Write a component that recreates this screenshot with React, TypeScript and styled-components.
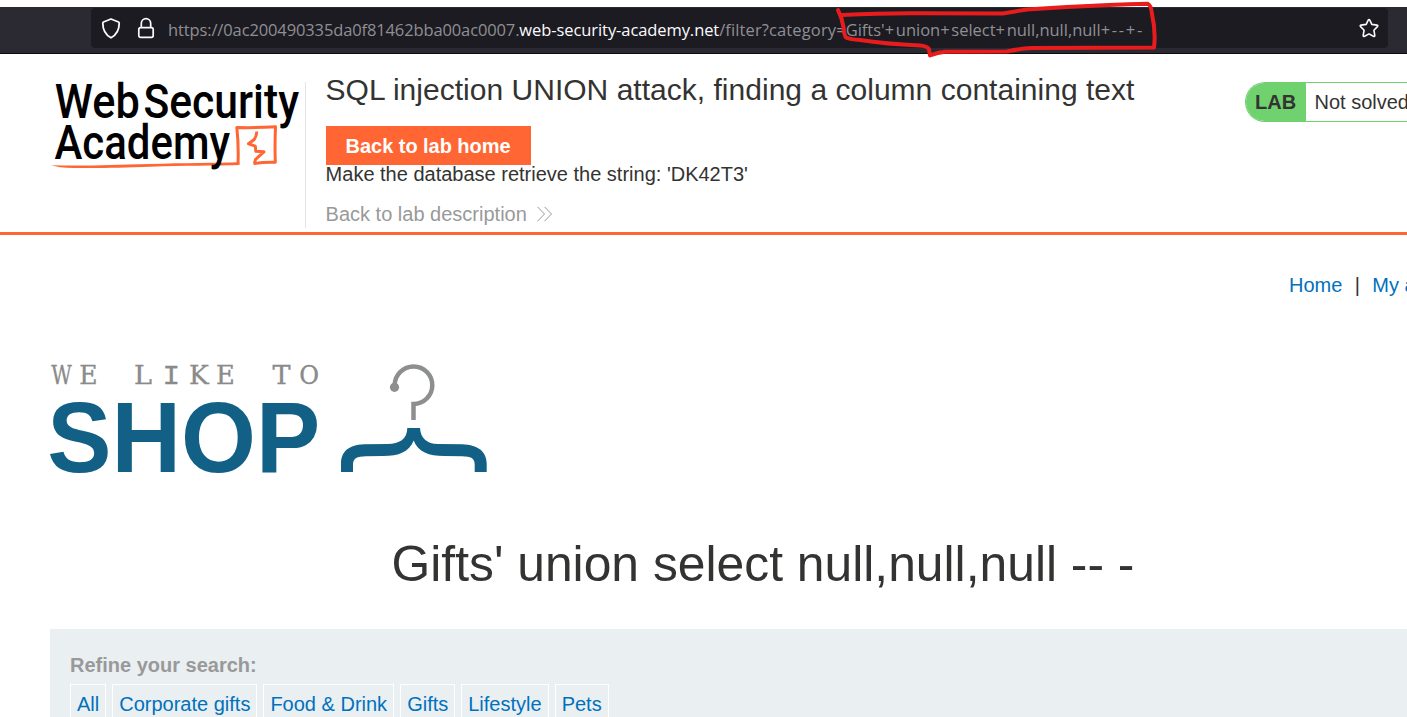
import React from "react";
import styled, { createGlobalStyle } from "styled-components";

const GlobalStyle = createGlobalStyle`
  html, body { margin: 0; padding: 0; background: #fff; overflow: hidden; }
  *, *::before, *::after { box-sizing: border-box; }
`;

const Page = styled.div`
  position: relative;
  width: 1407px;
  height: 717px;
  padding-top: 7px;
  overflow: hidden;
  background: #fff;
  color: #333332;
  font: 20px/23px "Liberation Sans", Arial, sans-serif;
`;

const BrowserBar = styled.div`
  height: 47px;
  padding: 1px 19px 0 91px;
  background: #2b2a33;
  border-bottom: 1px solid #0c0c0d;
`;

const AddressField = styled.div`
  display: flex;
  align-items: center;
  height: 40px;
  padding: 0 8px 0 9px;
  background: #1c1b22;
  border-radius: 4px;
  svg { flex: none; display: block; }
`;

const Url = styled.div`
  flex: 1;
  display: flex;
  margin-left: 11px;
  padding-top: 3px;
  white-space: pre;
  font: 16.5px/24px "Open Sans", "Noto Sans", sans-serif;
  color: #8f8f94;
`;

const UrlPart = styled.span<{ $spacing: number; $strong?: boolean }>`
  letter-spacing: ${(p) => p.$spacing}px;
  color: ${(p) => (p.$strong ? "#fbfbfe" : "inherit")};
`;

const LabHeader = styled.header`
  display: flex;
  align-items: flex-start;
  height: 181px;
  padding: 28px 0 0 50px;
  border-bottom: 3px solid #ff6633;
`;

const BrandCell = styled.div`
  width: 256px;
  height: 146px;
  border-right: 1px solid #e4e4e4;
  svg { display: block; overflow: visible; }
`;

const LabInfo = styled.div`
  flex: 1;
  padding-left: 19.6px;
`;

const LabTitle = styled.h2`
  margin: -10px 0 19px;
  font-weight: 400;
  font-size: 30px;
  line-height: 35px;
  letter-spacing: 0.02px;
  white-space: nowrap;
`;

const HomeButton = styled.a`
  display: block;
  width: 205px;
  height: 39px;
  padding-left: 20px;
  background: #ff6633;
  color: #fff;
  font-weight: 700;
  line-height: 40px;
  letter-spacing: -0.04px;
  white-space: nowrap;
`;

const Task = styled.p`
  margin: -2px 0 0;
  line-height: 23px;
`;

const DescriptionLink = styled.a`
  display: flex;
  align-items: center;
  gap: 10.5px;
  margin-top: 17px;
  color: #999;
  svg { margin-top: -2px; }
`;

const LabStatus = styled.div`
  display: flex;
  flex: none;
  width: 162px;
  height: 40px;
  border: 1px solid #70d16f;
  border-right: 0;
  border-radius: 20px 0 0 20px;
  line-height: 38px;
  white-space: nowrap;
  overflow: hidden;
`;

const StatusTag = styled.span`
  flex: none;
  width: 60px;
  padding-left: 9px;
  background: #70d16f;
  font-weight: 700;
`;

const StatusText = styled.span`
  padding-left: 8.5px;
`;

const TopNav = styled.nav`
  display: flex;
  gap: 12.4px;
  margin-top: 39px;
  padding-left: 1289px;
  white-space: nowrap;
  a { color: #0071bc; }
`;

const Shop = styled.main`
  width: 1476px;
  padding: 65px 0 0 50px;
`;

const ShopLogo = styled.svg`
  display: block;
  width: 440px;
  height: 112px;
`;

const Heading = styled.h1`
  margin: 62px 0 36px;
  text-align: center;
  font-weight: 400;
  font-size: 49.8px;
  line-height: 57px;
`;

const FilterPanel = styled.section`
  height: 120px;
  padding: 25px 20px;
  background: #eaeff2;
`;

const FilterLabel = styled.div`
  margin-bottom: 7px;
  color: #999;
  font-weight: 700;
`;

const FilterRow = styled.div`
  display: flex;
  gap: 6px;
`;

const FilterLink = styled.a`
  height: 41px;
  padding: 0 6px;
  border: 1px solid #fff;
  color: #0071bc;
  line-height: 38px;
  white-space: nowrap;
`;

const Annotation = styled.svg`
  position: absolute;
  left: 830px;
  top: 0;
  pointer-events: none;
`;

const ShieldIcon = () => (
  <svg width="22" height="24" viewBox="0 0 22 24" fill="none" stroke="#fbfbfe" strokeWidth="1.8" strokeLinejoin="round">
    <path d="M11 3 L18.5 6 Q19.2 6.3 19.2 7.2 C19.2 14 17 18.5 11 21.8 C5 18.5 2.8 14 2.8 7.2 Q2.8 6.3 3.5 6 Z" />
  </svg>
);

const LockIcon = () => (
  <svg width="22" height="24" viewBox="0 0 22 24" fill="none" stroke="#fbfbfe" strokeWidth="1.7" style={{ marginLeft: 13 }}>
    <rect x="3.8" y="11.6" width="14.4" height="9.8" rx="1.8" />
    <path d="M6.3 11.6 V7.4 a4.7 4.7 0 0 1 9.4 0 V11.6" />
  </svg>
);

const StarIcon = () => (
  <svg width="22" height="24" viewBox="0 0 22 24" fill="none" stroke="#fbfbfe" strokeWidth="1.6" strokeLinejoin="round">
    <path d="M10.2 4.1 Q11 2.8 11.8 4.1 L13.8 8.4 L19 9.1 Q20.4 9.5 19.4 10.6 L15.9 14.2 L16.8 19.4 Q16.8 20.9 15.4 20.3 L11 17.9 L6.6 20.3 Q5.2 20.9 5.2 19.4 L6.1 14.2 L2.6 10.6 Q1.6 9.5 3 9.1 L8.2 8.4 Z" />
  </svg>
);

const AcademyLogo = () => (
  <svg width="252" height="92" viewBox="50 82 252 92" fontFamily="Roboto, sans-serif" fontWeight="500" fontSize="47.5" fill="#000">
    <path d="M51 165.2 C80 166 110 165.2 150 164 C185 162.8 215 163 239.3 162.2 L239.3 165 C215 165.7 185 165.4 150 166.8 C110 168.2 80 168.6 60 167.2 Z" fill="#ff6633" />
    <path d="M238 164.5 Q238.8 145 236.8 127.5 Q256 128 275.5 126.8 Q274.7 145 275.3 162.3 Q264 162 253.5 163.6" fill="none" stroke="#ff6633" strokeWidth="3" strokeLinejoin="round" />
    <path d="M256.8 131.5 Q256.5 136.5 254.2 139.5 L248.5 143.8 L255.3 146.2 L255.8 151.3 L264 151.8 Q259 156 255.5 159.5 L254.5 163.5" fill="none" stroke="#ff6633" strokeWidth="3" strokeLinejoin="round" />
    <text x="54.8" y="117.5" textLength="85" lengthAdjust="spacingAndGlyphs">Web</text>
    <text x="143.5" y="117.5" textLength="155.5" lengthAdjust="spacingAndGlyphs">Security</text>
    <text x="54.5" y="159" textLength="175.5" lengthAdjust="spacingAndGlyphs">Academy</text>
  </svg>
);

const serif = '"DejaVu Serif", serif';
const mono = '"Liberation Mono", monospace';

const taglineLetters: [string, number, number, string][] = [
  ["W", 51.3, 20.5, serif], ["E", 79.3, 18.3, serif], ["L", 134, 18, serif],
  ["I", 162.5, 17.6, mono], ["K", 189, 19.8, serif], ["E", 216, 18.8, serif],
  ["T", 272.5, 18, serif], ["O", 299.3, 19.8, serif],
];

const ShopBanner = () => (
  <ShopLogo viewBox="50 362 440 112" overflow="visible">
    <g fill="#8a8a8a" stroke="#8a8a8a" strokeWidth="0.35">
      {taglineLetters.map(([letter, x, width, family], i) => (
        <text key={i} x={x} y="384" fontFamily={family} fontSize={family === mono ? 28.4 : 25.8} textLength={width} lengthAdjust="spacingAndGlyphs">{letter}</text>
      ))}
    </g>
    <text x="47.2" y="472.3" fontFamily='"Liberation Sans", Arial, sans-serif' fontWeight="700" fontSize="100" fill="#126085" textLength="273" lengthAdjust="spacingAndGlyphs">SHOP</text>
    <circle cx="394.5" cy="387.3" r="4.6" fill="#8c8e90" />
    <path d="M394.7 387 V385 A18.8 18.8 0 1 1 413.5 404 V420" fill="none" stroke="#8c8e90" strokeWidth="4.5" />
    <path d="M407.3 428 H420 C420.5 438 427 444 438 444 L462 444.3 C479 445 486.7 452 486.7 464 V472 H474.7 V465 C474.7 458 471 456.5 462 456.3 L444 456 C429 456 418 452 413.7 440.5 C409 452 399 456 383 456 L366 456.3 C357 456.5 353 458 353 465 V472 H341 V464 C341 452 348 445 364 444.3 L388 444 C399 444 407.3 439 407.3 428 Z" fill="#126085" />
  </ShopLogo>
);

const categories = ["All", "Corporate gifts", "Food & Drink", "Gifts", "Lifestyle", "Pets"];
const queryParts = "Gifts'+union+select+null,null,null+--+-".split(/([+-]+)/).filter(Boolean);

export default function App() {
  return (
    <Page>
      <GlobalStyle />
      <BrowserBar>
        <AddressField>
          <ShieldIcon />
          <LockIcon />
          <Url>
            <UrlPart $spacing={-0.125}>https://0ac200490335da0f81462bba00ac0007.</UrlPart>
            <UrlPart $spacing={-0.08} $strong>web-security-academy.net</UrlPart>
            <UrlPart $spacing={0.12}>/filter?category=</UrlPart>
            <span>
              {queryParts.map((part, i) => (
                <UrlPart key={i} $spacing={/[+-]/.test(part) ? 1.7 : -0.02}>{part}</UrlPart>
              ))}
            </span>
          </Url>
          <StarIcon />
        </AddressField>
      </BrowserBar>
      <LabHeader>
        <BrandCell>
          <AcademyLogo />
        </BrandCell>
        <LabInfo>
          <LabTitle>SQL injection UNION attack, finding a column containing text</LabTitle>
          <HomeButton>Back to lab home</HomeButton>
          <Task>Make the database retrieve the string: 'DK42T3'</Task>
          <DescriptionLink>
            Back to lab description
            <svg width="16" height="16" viewBox="0 0 16 16" fill="none" stroke="#999" strokeWidth="1">
              <path d="M0.5 0.8 L7.5 8 L0.5 15.2 M7.5 0.8 L14.5 8 L7.5 15.2" />
            </svg>
          </DescriptionLink>
        </LabInfo>
        <LabStatus>
          <StatusTag>LAB</StatusTag>
          <StatusText>Not solved</StatusText>
        </LabStatus>
      </LabHeader>
      <TopNav>
        <a>Home</a>
        <span>|</span>
        <a>My account</a>
      </TopNav>
      <Shop>
        <ShopBanner />
        <Heading>Gifts' union select null,null,null -- -</Heading>
        <FilterPanel>
          <FilterLabel>Refine your search:</FilterLabel>
          <FilterRow>
            {categories.map((name) => (
              <FilterLink key={name}>{name}</FilterLink>
            ))}
          </FilterRow>
        </FilterPanel>
      </Shop>
      <Annotation width="335" height="62" viewBox="830 0 335 62" fill="none" stroke="#e81c1c" strokeWidth="4" strokeLinecap="round" strokeLinejoin="round">
        <path d="M838 10 Q842 18 843.5 27 Q844 35 846 37.5 Q850 39.5 860 40 Q885 44 920 45.5 Q927 46 929 49 L930 55.5 Q938 52.5 945 51.8 L1007 51.5 Q1020 48.5 1032 48 L1154 47.5 Q1156 32 1152 14 Q1151 5 1147.5 3.7 Q1110 4.5 1067 7 L1027 9.5 L1003 13.5 L920 13.3 Q883 13 842 15" />
      </Annotation>
    </Page>
  );
}
